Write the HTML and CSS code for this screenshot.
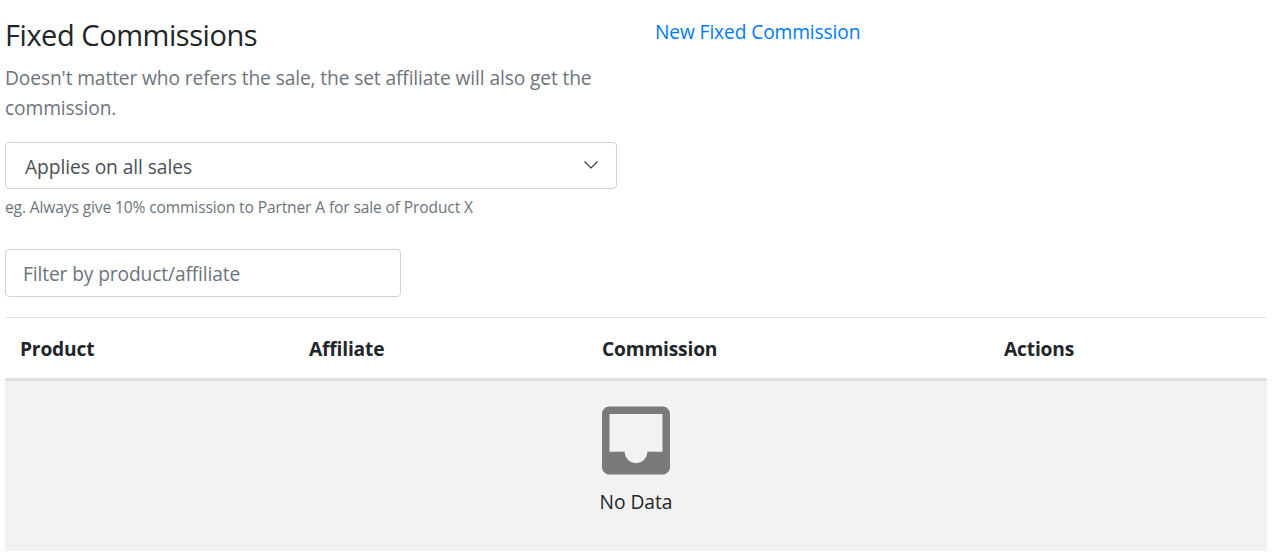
FILE: index.html
```html
<!DOCTYPE html>
<html lang="en">
<head>
<meta charset="utf-8">
<title>Fixed Commissions</title>
<link rel="stylesheet" href="styles.css">
</head>
<body>
<main class="page">
  <header class="top">
    <section class="intro">
      <h1 class="title">Fixed Commissions</h1>
      <p class="lead">Doesn't matter who refers the sale, the set affiliate will also get the commission.</p>
      <div class="select" role="combobox" aria-expanded="false">
        <span>Applies on all sales</span>
        <svg class="chevron" viewBox="0 0 16 10" width="16" height="10"><path d="M1.5 1.5 8 8l6.5-6.5" fill="none" stroke="#343a40" stroke-width="1.2"/></svg>
      </div>
      <p class="hint">eg. Always give 10% commission to Partner A for sale of Product X</p>
    </section>
    <a class="new-link" href="#">New Fixed Commission</a>
  </header>
  <div class="filter">Filter by product/affiliate</div>
  <section class="table">
    <div class="head">
      <span>Product</span>
      <span>Affiliate</span>
      <span>Commission</span>
      <span>Actions</span>
    </div>
    <div class="empty">
      <svg class="inbox" viewBox="3 2.87 18 18.26" width="68" height="69"><path fill="#7a7a7a" d="M19 3H4.99C3.88 3 3.01 3.89 3.01 5L3 19c0 1.1.88 2 1.99 2H19c1.1 0 2-.9 2-2V5c0-1.11-.9-2-2-2zm0 12h-4c0 1.66-1.35 3-3 3s-3-1.34-3-3H4.99V5H19v10z"/></svg>
      <span class="no-data">No Data</span>
    </div>
  </section>
</main>
</body>
</html>
```
FILE: styles.css
```css
* { box-sizing: border-box; }
body { margin: 0; background: #fff; color: #212529; font: 19.2px/30px "Segoe UI", "Open Sans", "Noto Sans", sans-serif; letter-spacing: -0.12px; }
.page { padding: 17px 5px 5px; height: 556px; }
.top { display: grid; grid-template-columns: 612px 1fr; column-gap: 38px; height: 232px; }
.title { margin: 0 0 11px; font-size: 29px; font-weight: 400; line-height: 35px; letter-spacing: -0.45px; }
.lead { margin: 0; color: #6c757d; }
.select { display: flex; align-items: center; justify-content: space-between; height: 47px; margin-top: 19px; padding: 2px 17px 0 19px; border: 1px solid #ced4da; border-radius: 4px; color: #495057; letter-spacing: -0.07px; }
.chevron { margin-top: -4px; }
.hint { margin: 6px 0 0; color: #6c757d; font-size: 15.6px; line-height: 24px; letter-spacing: -0.14px; }
.new-link { color: #007bff; text-decoration: none; }
.filter { display: flex; align-items: center; width: 396px; height: 48px; padding: 1px 17px 0; border: 1px solid #ced4da; border-radius: 4px; color: #6c757d; }
.table { margin-top: 20px; border-top: 1px solid #dee2e6; }
.head { display: grid; grid-template-columns: 289px 293px 402px 1fr; align-items: center; height: 63px; padding: 2px 0 0 15px; border-bottom: 3px solid #dee2e6; font-weight: 700; letter-spacing: -0.18px; }
.empty { display: flex; flex-direction: column; align-items: center; height: 170px; padding-top: 25px; background: #f2f2f2; }
.no-data { margin-top: 12px; letter-spacing: 0; }
```
